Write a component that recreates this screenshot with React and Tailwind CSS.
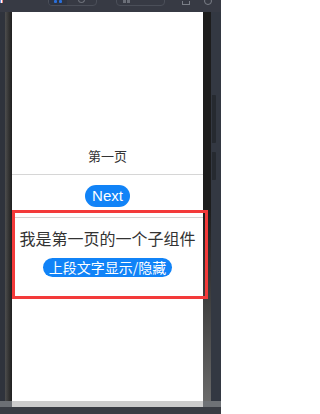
import React, { useState } from 'react';

const cjk = { fontFamily: '"Noto Sans CJK SC", "Liberation Sans", sans-serif' };
const latin = { fontFamily: '"Liberation Sans", Arial, sans-serif' };

function TopBar() {
  return (
    <div className="h-[12px] shrink-0 bg-[#373a44] flex items-start overflow-hidden">
      {/* tiny flag */}
      <div className="w-[3px] h-[3px] bg-gradient-to-r from-[#3355cc] via-white to-[#dd3333]" />
      {/* device toggle group */}
      <div className="ml-[45px] -mt-[10px] w-[49px] h-[16px] rounded-[4px] border border-[#4b4f59] flex overflow-hidden">
        <div className="w-[18px] bg-[#2e3442] flex items-end justify-center gap-[2px] pb-[2px]">
          <span className="w-[3px] h-[3px] bg-[#2a6fdc] rounded-[1px]" />
          <span className="w-[3px] h-[3px] bg-[#2a6fdc] rounded-[1px]" />
        </div>
        <div className="flex-1 flex items-end justify-center pb-[2px]">
          <span className="w-[7px] h-[4px] rounded-b-full border border-t-0 border-[#6b6f78]" />
        </div>
      </div>
      {/* second group */}
      <div className="ml-[19px] -mt-[10px] w-[49px] h-[16px] rounded-[4px] border border-[#4b4f59] flex items-end pl-[6px] pb-[2px] gap-[1px]">
        <span className="w-[3px] h-[4px] bg-[#6b6f78]" />
        <span className="w-[3px] h-[4px] bg-[#6b6f78]" />
      </div>
      <div className="ml-[17px] mt-[1px] w-[8px] h-[4px] border border-t-0 border-[#7a7e87]" />
      <div className="ml-[14px] -mt-[3px] w-[8px] h-[8px] rounded-full border border-[#7a7e87]" />
    </div>
  );
}

function Child() {
  const [show, setShow] = useState(true);
  return (
    <div className="mt-[10px] border-t border-[#d4d4d4] flex flex-col items-center">
      <p
        className={`mt-[9px] h-[22px] text-[16px] leading-[22px] text-[#333] ${show ? '' : 'invisible'}`}
        style={cjk}
      >
        我是第一页的一个子组件
      </p>
      <button
        onClick={() => setShow(!show)}
        className="mt-[9px] h-[19px] px-[6px] rounded-full bg-[#1183f7] text-white text-[14px] leading-[19px]"
        style={cjk}
      >
        上段文字显示/隐藏
      </button>
    </div>
  );
}

export default function App() {
  return (
    <div className="relative w-[221px] h-[414px] bg-[#343842] flex flex-col overflow-hidden">
      <TopBar />

      <div className="flex-1 flex min-h-0">
        <div className="w-[5px] bg-[#2f333c]" />
        <div className="w-[7px] bg-gradient-to-r from-[#4e4e4e] to-[#1f1f1f]" />

        {/* Simulator screen */}
        <div className="w-[191px] bg-white flex flex-col">
          <div className="h-[163px] shrink-0 flex items-end justify-center pb-[9px] border-b border-[#d6d6d6]">
            <span className="text-[13px] leading-[18px] text-[#333]" style={cjk}>
              第一页
            </span>
          </div>
          <div className="h-[1px]" />
          <div className="mt-[9px] flex justify-center">
            <button
              className="h-[22px] px-[7px] rounded-full bg-[#1183f7] text-white text-[15px] leading-[22px]"
              style={latin}
            >
              Next
            </button>
          </div>
          <Child />
        </div>

        <div className="w-[8px] bg-gradient-to-b from-[#1c1c1c] via-[#1c1c1c] to-[#6a6a6a]" />
        <div className="flex-1 bg-[#333842] flex flex-col pl-[1px]">
          <div className="mt-[83px] w-[4px] h-[48px] bg-[#262a30] rounded-r-[1px]" />
          <div className="mt-[9px] w-[4px] h-[28px] bg-[#262a30] rounded-r-[1px]" />
        </div>
      </div>

      <div className="h-[6px] shrink-0 flex">
        <div className="w-[12px] bg-[#6c6f74]" />
        <div className="w-[191px] bg-[#cccccc]" />
        <div className="flex-1 bg-[#6f7276]" />
      </div>
      <div className="h-[7px] shrink-0 bg-[#393c43]" />

      {/* inspector highlight over the child component */}
      <div className="absolute left-[12px] top-[210px] w-[196px] h-[89px] border-[3px] border-[#f33a3a] pointer-events-none" />
    </div>
  );
}
